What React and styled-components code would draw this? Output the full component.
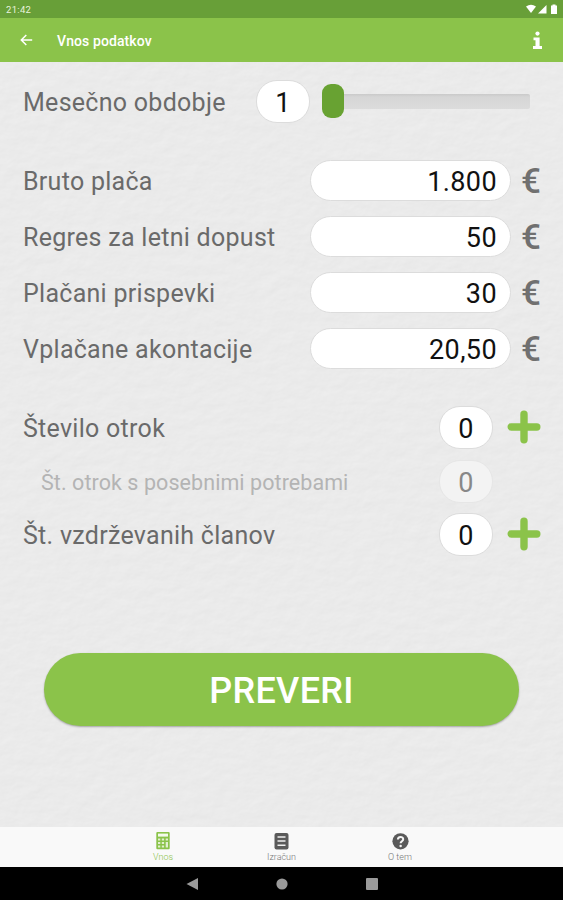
import React, { useState } from 'react';
import styled, { createGlobalStyle } from 'styled-components';

const paper = `url("data:image/svg+xml,${encodeURIComponent(
  `<svg xmlns="http://www.w3.org/2000/svg" width="563" height="765"><filter id="p" x="0" y="0" width="100%" height="100%"><feTurbulence type="fractalNoise" baseFrequency="0.06 0.09" numOctaves="4" seed="8"/><feDiffuseLighting surfaceScale="0.2" diffuseConstant="1.16" lighting-color="#ececec"><feDistantLight azimuth="235" elevation="58"/></feDiffuseLighting></filter><rect width="563" height="765" filter="url(#p)"/></svg>`
)}")`;

const GlobalStyle = createGlobalStyle`
* { box-sizing: border-box; }
body {
  margin: 0;
  background: #000;
  font-family: Roboto, "Liberation Sans", sans-serif;
}
button { font-family: inherit; border: none; padding: 0; background: none; }
svg { display: block; }
`;

const Screen = styled.div`
  width: 563px;
  height: 900px;
  display: flex;
  flex-direction: column;
  overflow: hidden;
`;

const StatusBar = styled.div`
  height: 18px;
  flex: none;
  display: flex;
  align-items: center;
  justify-content: space-between;
  padding: 0 4px 0 6px;
  background: #689f38;
  color: #e9f3df;
  font-size: 9.5px;
  letter-spacing: 0.3px;
`;

const AppBar = styled.header`
  height: 44px;
  flex: none;
  display: flex;
  align-items: center;
  padding: 0 20px;
  background: #8bc34a;
  color: #fff;
`;

const Title = styled.h1`
  flex: 1;
  margin: 1px 0 0 24px;
  font-size: 14px;
  font-weight: 500;
  letter-spacing: 0.1px;
`;

const Content = styled.main`
  flex: 1;
  padding: 12px 22px 0 23px;
  background: #e9e9e9 ${paper};
`;

const Row = styled.div`
  height: ${props => props.$height || 56}px;
  display: flex;
  align-items: center;
`;

const Group = styled.section`
  margin-top: 23px;
`;

const Label = styled.label`
  flex: 1;
  white-space: nowrap;
  padding-left: ${props => (props.$sub ? 18 : 0)}px;
  font-size: ${props => (props.$sub ? 21.5 : 25)}px;
  letter-spacing: ${props => (props.$sub ? 0.07 : 0.28)}px;
  color: ${props => (props.$sub ? '#b4b4b4' : '#6a6a6a')};
`;

const Pill = styled.div`
  width: ${props => (props.$wide ? 201 : 54)}px;
  height: ${props => (props.$wide ? 41 : 43)}px;
  margin-bottom: 2px;
  padding: ${props => (props.$wide ? '3px 13px 0 0' : '3px 0 0')};
  display: flex;
  align-items: center;
  justify-content: ${props => (props.$wide ? 'flex-end' : 'center')};
  border-radius: 21px;
  background: ${props => (props.$off ? '#f3f3f3' : '#fff')};
  border: 1px solid ${props => (props.$off ? '#e6e6e6' : '#dcdcdc')};
  color: ${props => (props.$off ? '#888' : '#111')};
  font-size: 27px;
  letter-spacing: 0.4px;
`;

const Euro = styled.span`
  width: 30px;
  padding: 2px 0 0 10px;
  font-size: 35px;
  font-weight: 500;
  line-height: 40px;
  color: #707070;
`;

const Plus = styled.button`
  width: 48px;
  padding: 0 0 2px 14px;
`;

const Slider = styled.div`
  width: 208px;
  height: 34px;
  margin: 0 11px 2px 12px;
  display: flex;
  align-items: center;
`;

const Thumb = styled.div`
  width: 22px;
  height: 34px;
  border-radius: 9px;
  background: #68a232;
`;

const Track = styled.div`
  flex: 1;
  height: 15px;
  border-radius: 0 2px 2px 0;
  background: linear-gradient(#c9c9c9, #d6d6d6 20%, #dcdcdc);
`;

const CheckButton = styled.button`
  display: block;
  width: 475px;
  height: 73px;
  margin: 91px 0 0 21px;
  border-radius: 37px;
  background: #8bc34a;
  box-shadow: 0 1px 2px rgba(0, 0, 0, 0.3);
  color: #fff;
  font-size: 36px;
  font-weight: 500;
  letter-spacing: 0.3px;
  padding-top: 3px;
`;

const Tabs = styled.nav`
  height: 40px;
  flex: none;
  display: flex;
  justify-content: center;
  background: #f9f9f9;
`;

const Tab = styled.div`
  width: 118.5px;
  display: flex;
  flex-direction: column;
  align-items: center;
  padding-top: 4px;
  gap: 2px;
  font-size: 9px;
  font-weight: 300;
  line-height: 10px;
  color: ${props => (props.$active ? '#8bc34a' : '#777')};
`;

const SystemNav = styled.div`
  height: 33px;
  flex: none;
  display: flex;
  align-items: center;
  justify-content: center;
  gap: 78px;
  background: #000;
`;

const StatusIcons = () => (
  <svg width="34" height="12" viewBox="0 0 34 12" fill="#fff">
    <path d="M1 3.6Q6 -0.2 11 3.6L6 10Z" />
    <path d="M21.5 2V10.5H13Z" />
    <path d="M26 2.5h1.5v-1h3v1H32V11h-6Z" />
  </svg>
);

const BackIcon = () => (
  <svg width="13" height="12" viewBox="0 0 13 12" fill="none" stroke="#fff" strokeWidth="1.5">
    <path d="M12.2 6H1.5M6.3 1L1.3 6L6.3 11" />
  </svg>
);

const InfoIcon = () => (
  <svg width="11" height="19" viewBox="0 0 11 19" fill="#fff">
    <circle cx="5.5" cy="2.6" r="2.1" />
    <path d="M1.5 6.5H7.6V15H10V18H1V15H3.5V9.3H1.5Z" />
  </svg>
);

const PlusIcon = () => (
  <svg width="34" height="34" viewBox="0 0 34 34" stroke="#8bc34a" strokeWidth="7.4" strokeLinecap="round">
    <path d="M17 4.2V29.8M4.2 17H29.8" />
  </svg>
);

const CalculatorIcon = () => (
  <svg width="14" height="19" viewBox="0 0 14 19">
    <rect x="0.3" y="1" width="13.4" height="17.2" rx="1" fill="#8bc34a" />
    <path d="M2 2.6H12V5.6H2Z" fill="#f4faec" />
    <path d="M2 7.5h2.3v2H2zM5.8 7.5h2.3v2H5.8zM9.7 7.5H12v2H9.7zM2 11h2.3v2H2zM5.8 11h2.3v2H5.8zM9.7 11H12v5.5H9.7zM2 14.5h2.3v2H2zM5.8 14.5h2.3v2H5.8z" fill="#e2f0d0" />
  </svg>
);

const SheetIcon = () => (
  <svg width="15" height="19" viewBox="0 0 15 19">
    <rect x="0.5" y="2" width="14" height="16.4" rx="2" fill="#5a5a5a" />
    <path d="M3.5 6H11.5M3.5 10.1H11.5M3.5 14.2H11.5" stroke="#f0f0f0" strokeWidth="1.5" />
  </svg>
);

const HelpIcon = () => (
  <svg width="17" height="19" viewBox="0 0 17 19">
    <circle cx="8.5" cy="10.3" r="8.1" fill="#5a5a5a" />
    <path d="M5.9 8.5C5.9 5.2 11.2 5.2 11.2 8.3C11.2 10.3 8.6 10.1 8.6 12.3" fill="none" stroke="#f5f5f5" strokeWidth="2" />
    <circle cx="8.6" cy="14.9" r="1.25" fill="#f5f5f5" />
  </svg>
);

const amounts = [
  { label: 'Bruto plača', value: '1.800' },
  { label: 'Regres za letni dopust', value: '50' },
  { label: 'Plačani prispevki', value: '30' },
  { label: 'Vplačane akontacije', value: '20,50' },
];

export default function App() {
  const [children, setChildren] = useState(0);
  const [members, setMembers] = useState(0);

  return (
    <Screen>
      <GlobalStyle />
      <StatusBar>
        <span>21:42</span>
        <StatusIcons />
      </StatusBar>
      <AppBar>
        <BackIcon />
        <Title>Vnos podatkov</Title>
        <InfoIcon />
      </AppBar>

      <Content>
        <Row>
          <Label>Mesečno obdobje</Label>
          <Pill>1</Pill>
          <Slider>
            <Thumb />
            <Track />
          </Slider>
        </Row>

        <Group>
          {amounts.map(item => (
            <Row key={item.label}>
              <Label>{item.label}</Label>
              <Pill $wide>{item.value}</Pill>
              <Euro>€</Euro>
            </Row>
          ))}
        </Group>

        <Group>
          <Row>
            <Label>Število otrok</Label>
            <Pill>{children}</Pill>
            <Plus onClick={() => setChildren(children + 1)}><PlusIcon /></Plus>
          </Row>
          <Row $height={52}>
            <Label $sub>Št. otrok s posebnimi potrebami</Label>
            <Pill $off>0</Pill>
            <Plus as="span" />
          </Row>
          <Row $height={54}>
            <Label>Št. vzdrževanih članov</Label>
            <Pill>{members}</Pill>
            <Plus onClick={() => setMembers(members + 1)}><PlusIcon /></Plus>
          </Row>
        </Group>

        <CheckButton>PREVERI</CheckButton>
      </Content>

      <Tabs>
        <Tab $active><CalculatorIcon />Vnos</Tab>
        <Tab><SheetIcon />Izračun</Tab>
        <Tab><HelpIcon />O tem</Tab>
      </Tabs>
      <SystemNav>
        <svg width="12" height="12" viewBox="0 0 12 12" fill="#9a9a9a"><path d="M12 0V12L0.5 6Z" /></svg>
        <svg width="12" height="12" viewBox="0 0 12 12" fill="#9a9a9a"><circle cx="6" cy="6" r="5.6" /></svg>
        <svg width="12" height="12" viewBox="0 0 12 12" fill="#9a9a9a"><rect width="12" height="12" rx="1" /></svg>
      </SystemNav>
    </Screen>
  );
}
